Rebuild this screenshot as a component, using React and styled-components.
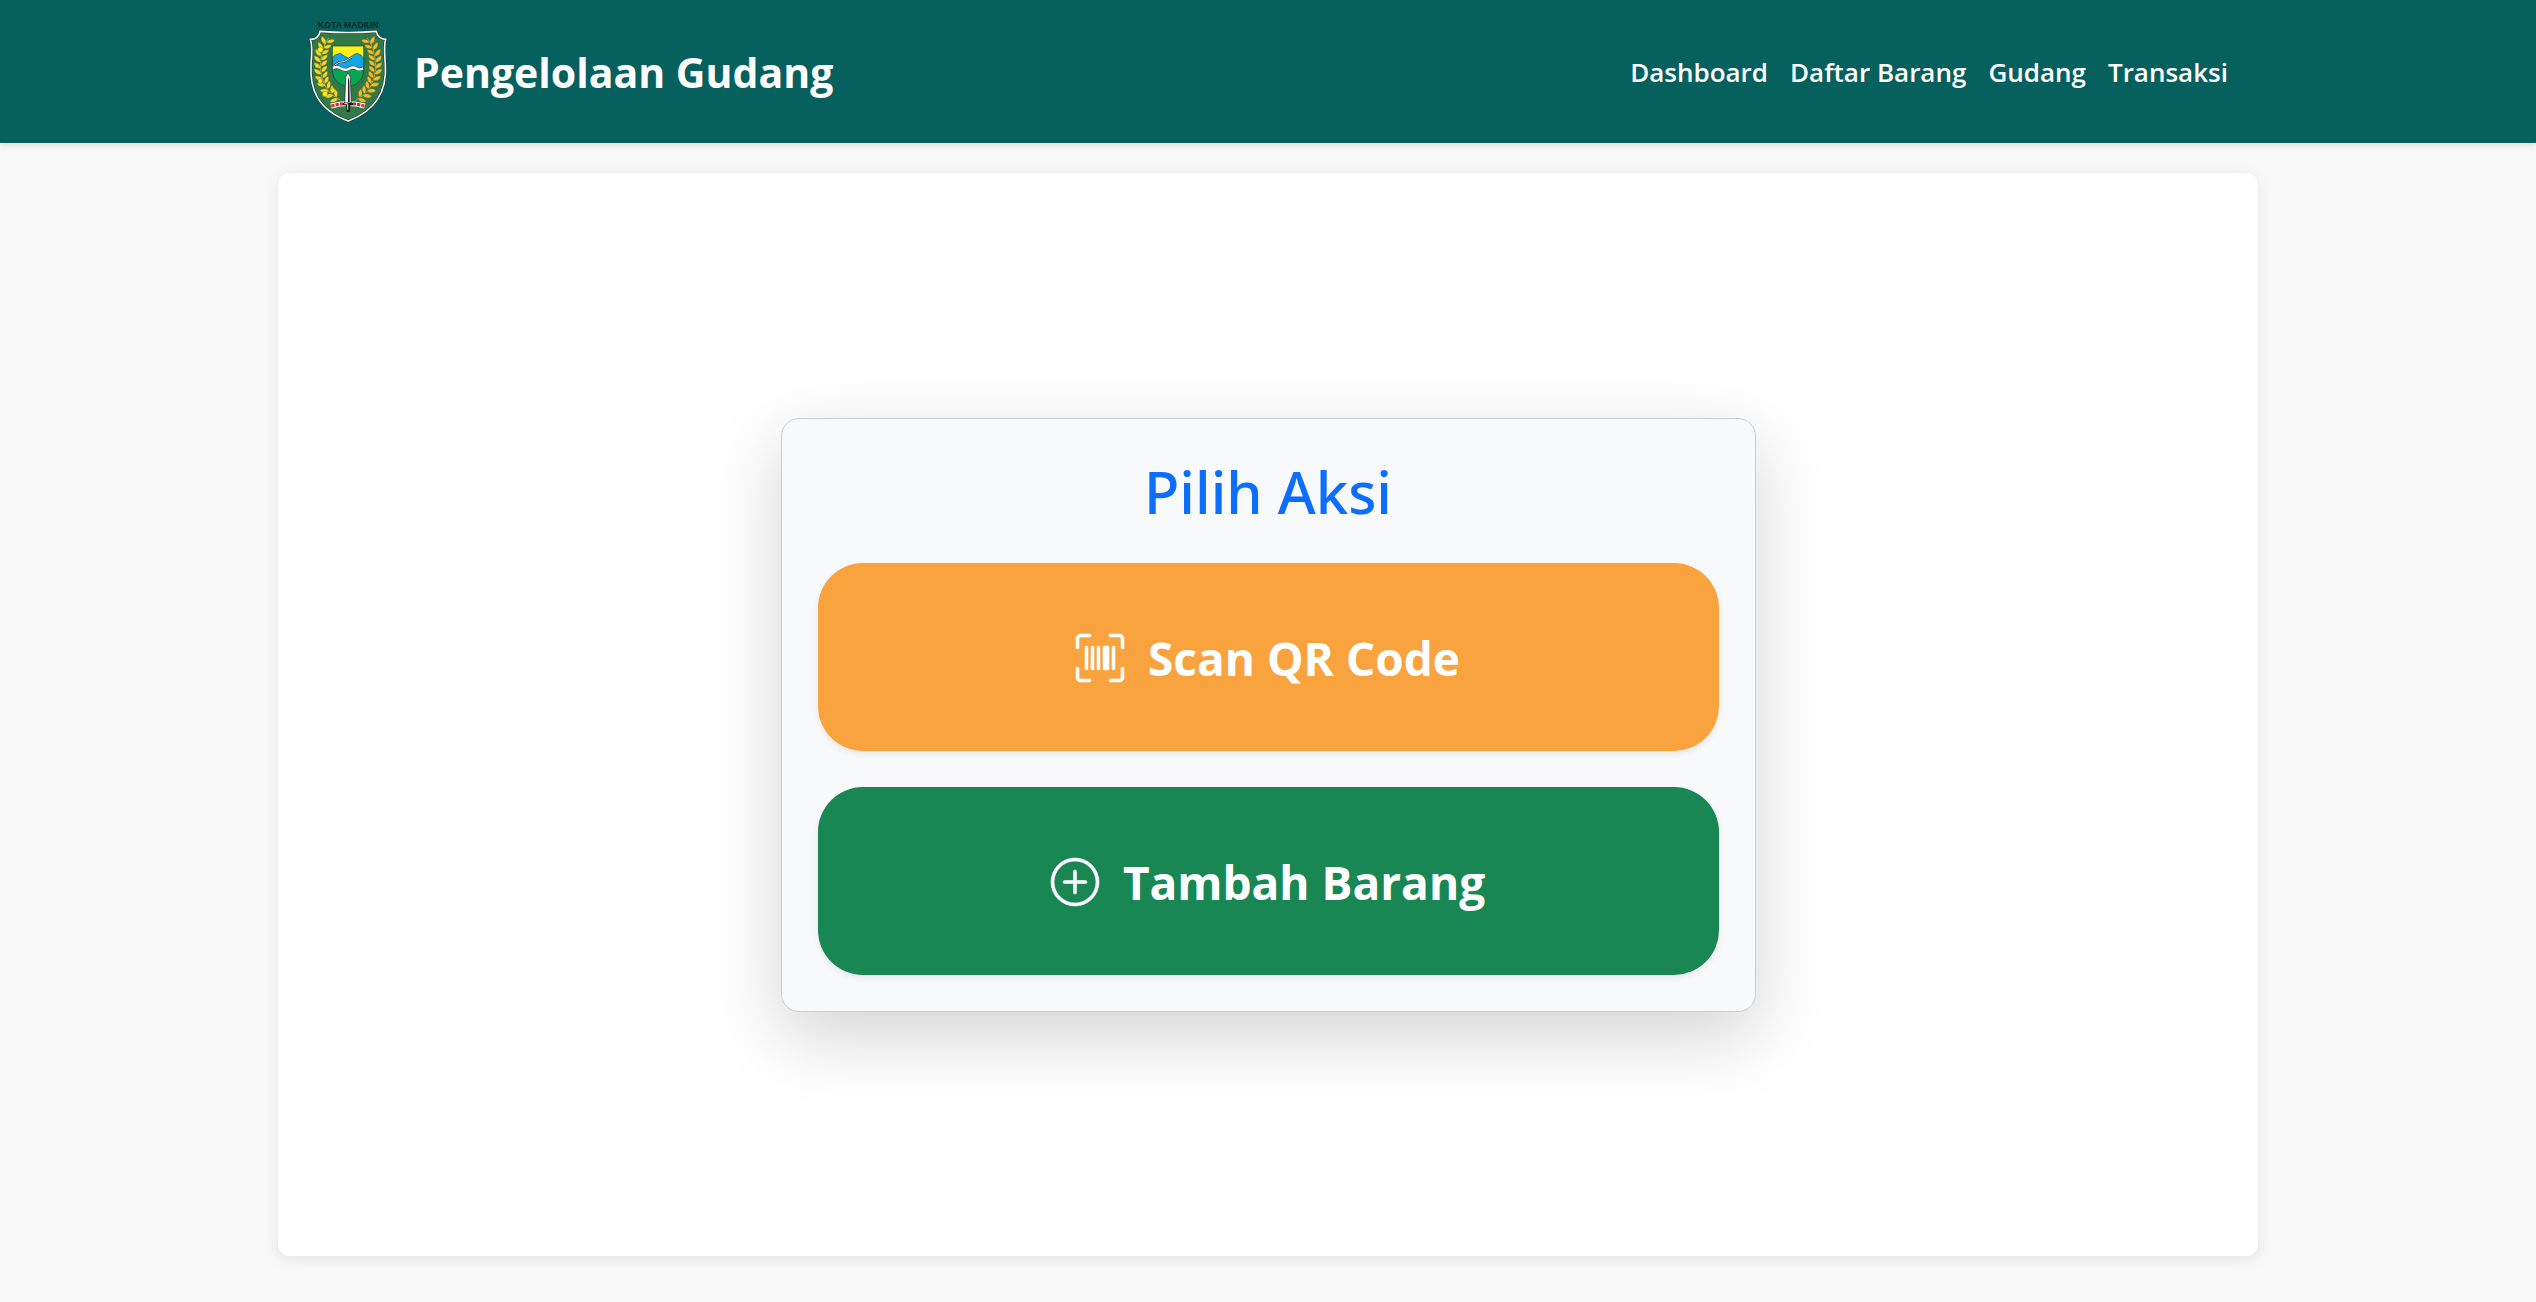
import React from 'react';
import styled, { createGlobalStyle } from 'styled-components';
import { BsUpcScan, BsPlusCircle } from 'react-icons/bs';

const GlobalStyle = createGlobalStyle`
  * {
    box-sizing: border-box;
  }

  body {
    margin: 0;
    background-color: #f9f9f9;
    font-family: 'Segoe UI', 'Open Sans', 'Noto Sans', sans-serif;
  }
`;

const Page = styled.div`
  display: flex;
  flex-direction: column;
  min-height: 100vh;
`;

const Header = styled.header`
  background-color: #06605d;
  box-shadow: 0 3px 6px rgba(0, 0, 0, 0.1);
`;

const HeaderInner = styled.div`
  display: flex;
  align-items: center;
  justify-content: space-between;
  width: 100%;
  max-width: 1980px;
  margin: 0 auto;
  padding: 21px 30px;
`;

const Brand = styled.a`
  display: flex;
  align-items: center;
  gap: 26px;
  color: #ffffff;
  font-size: 41px;
  font-weight: 700;
  line-height: 60px;
  text-decoration: none;
`;

const Logo = styled.svg`
  display: block;
  width: 80px;
  height: 101px;
  overflow: visible;
`;

const Nav = styled.nav`
  display: flex;
  gap: 22px;
`;

const NavLink = styled.a`
  color: #ffffff;
  font-size: 26px;
  font-weight: 600;
  line-height: 40px;
  text-decoration: none;
`;

const Main = styled.main`
  display: flex;
  flex: 1;
  align-items: center;
  justify-content: center;
  width: 100%;
  max-width: 1980px;
  margin: 30px auto 46px;
  padding: 30px;
  background-color: #ffffff;
  border-radius: 12px;
  box-shadow: 0 3px 15px rgba(0, 0, 0, 0.1);
`;

const ActionCard = styled.section`
  display: flex;
  flex-direction: column;
  gap: 36px;
  width: 100%;
  max-width: 975px;
  padding: 36px;
  background-color: #f8f9fb;
  border: 1px solid #cccdce;
  border-radius: 18px;
  box-shadow: 0 24px 72px rgba(0, 0, 0, 0.175);
`;

const Title = styled.h1`
  margin: 0;
  padding-top: 2px;
  color: #0d6efd;
  font-family: 'Segoe UI', 'Noto Sans', 'Open Sans', sans-serif;
  font-size: 58px;
  font-weight: 500;
  line-height: 70px;
  text-align: center;
`;

const ActionButton = styled.button`
  display: flex;
  align-items: center;
  justify-content: center;
  gap: 24px;
  width: 100%;
  padding: 59px 36px 57px;
  border: none;
  border-radius: 45px;
  background-color: ${(props) => props.$color};
  box-shadow: 0 3px 6px rgba(0, 0, 0, 0.075);
  color: #ffffff;
  font-family: inherit;
  font-size: 46px;
  font-weight: 700;
  line-height: 72px;
  cursor: pointer;

  svg {
    width: 48px;
    height: 48px;
    overflow: visible;
    stroke: currentColor;
    stroke-width: 0.2;
  }
`;

const links = ['Dashboard', 'Daftar Barang', 'Gudang', 'Transaksi'];

// x, y and direction of the stem at every pair of leaves, top to bottom
const stem = [
  [113, 124, 24],
  [104, 141, 22],
  [98, 159, 12],
  [96, 177, 4],
  [96, 195, -2],
  [97, 213, -6],
  [101, 231, -14],
  [107, 248, -24],
  [116, 264, -36],
  [128, 278, -46],
  [142, 289, -58],
];

const Wreath = ({ color, berries }) => (
  <g fill={color} stroke="#4f5a1a" strokeWidth="1">
    <path d="M119 112C90 150 88 215 108 253C118 273 132 285 153 297" fill="none" stroke="#c9b72a" strokeWidth="3" />
    {stem.map(([x, y, angle]) => (
      <g key={y} transform={`translate(${x} ${y}) rotate(${angle})`}>
        <path d="M0 7C-13 8-21 0-21-11C-10-10-1-4 0 7Z" />
        <path d="M0 0C11 1 19-6 19-17C8-16 0-10 0 0Z" />
      </g>
    ))}
    {berries && (
      <g fill="#ffe81c">
        <circle cx="94" cy="146" r="8" />
        <circle cx="84" cy="194" r="6" />
        <circle cx="94" cy="240" r="7" />
        <circle cx="108" cy="279" r="8" />
        <circle cx="131" cy="268" r="7" />
      </g>
    )}
  </g>
);

const SHIELD = 'M93 91Q178 98 262 91C264 106 276 115 290 115C284 134 287 160 289 190C294 262 270 325 178 360C84 325 62 262 66 190C69 160 71 134 64 115C80 115 91 106 93 91Z';
const INNER = 'M130 135H224V205C224 236 205 252 177 258C149 252 130 236 130 205Z';

const CityLogo = () => (
  <Logo viewBox="57 60 240 303" role="img" aria-label="Kota Madiun">
    <path d={SHIELD} fill="#32794a" stroke="#102f25" strokeWidth="8" />
    <path d={SHIELD} fill="none" stroke="#f4f4f4" strokeWidth="5" />
    <text x="178" y="81" textAnchor="middle" fontFamily="Liberation Sans, sans-serif" fontSize="26" fontWeight="700" fill="#102b2b">
      KOTA MADIUN
    </text>

    <Wreath color="#f6d62b" berries />
    <g transform="translate(354 0) scale(-1 1)">
      <Wreath color="#f4b92c" />
    </g>

    <path d={INNER} fill="#08a650" />
    <path d="M130 135H224V200H130Z" fill="#fff01a" />
    <path d="M130 170L140 161L154 157L166 165L178 172L190 164L203 157L216 162L224 173V203H130Z" fill="#14a5e6" stroke="#164a5a" strokeWidth="2" />
    <path d="M130 197L150 184L165 182L188 169" fill="none" stroke="#173c48" strokeWidth="6" />
    <path d="M130 197L150 184L165 182L188 169" fill="none" stroke="#d9eef2" strokeWidth="3" />
    <path d="M131 203C138 196 148 198 155 202S172 208 180 203S197 199 204 203S217 205 223 202" fill="none" stroke="#173c48" strokeWidth="10" />
    <path d="M131 203C138 196 148 198 155 202S172 208 180 203S197 199 204 203S217 205 223 202" fill="none" stroke="#ffffff" strokeWidth="7" />
    <path d={INNER} fill="none" stroke="#12392a" strokeWidth="2" />

    <path d="M126 315Q177 300 227 315" fill="none" stroke="#ffffff" strokeWidth="15" />
    <path d="M127 315Q177 300 226 315" fill="none" stroke="#e5262c" strokeWidth="9" strokeDasharray="10 3" />
    <path d="M177 214L184 228L187 306H167L170 228Z" fill="#f7f7f7" stroke="#16211d" strokeWidth="2" />
    <path d="M177 228L181 240L182 304H177Z" fill="#18201e" />
    <path d="M162 305H192V313H184L182 333H173L171 313H162Z" fill="#18201e" />
    <path d="M166 308H176V326" fill="none" stroke="#e8e8e8" strokeWidth="3" />
  </Logo>
);

const App = () => {
  return (
    <>
      <GlobalStyle />
      <Page>
        <Header>
          <HeaderInner>
            <Brand href="#">
              <CityLogo />
              Pengelolaan Gudang
            </Brand>
            <Nav>
              {links.map((link) => (
                <NavLink key={link} href="#">{link}</NavLink>
              ))}
            </Nav>
          </HeaderInner>
        </Header>

        <Main>
          <ActionCard>
            <Title>Pilih Aksi</Title>
            <ActionButton type="button" $color="#f9a33f">
              <BsUpcScan />
              Scan QR Code
            </ActionButton>
            <ActionButton type="button" $color="#198754">
              <BsPlusCircle />
              Tambah Barang
            </ActionButton>
          </ActionCard>
        </Main>
      </Page>
    </>
  );
};

export default App;
